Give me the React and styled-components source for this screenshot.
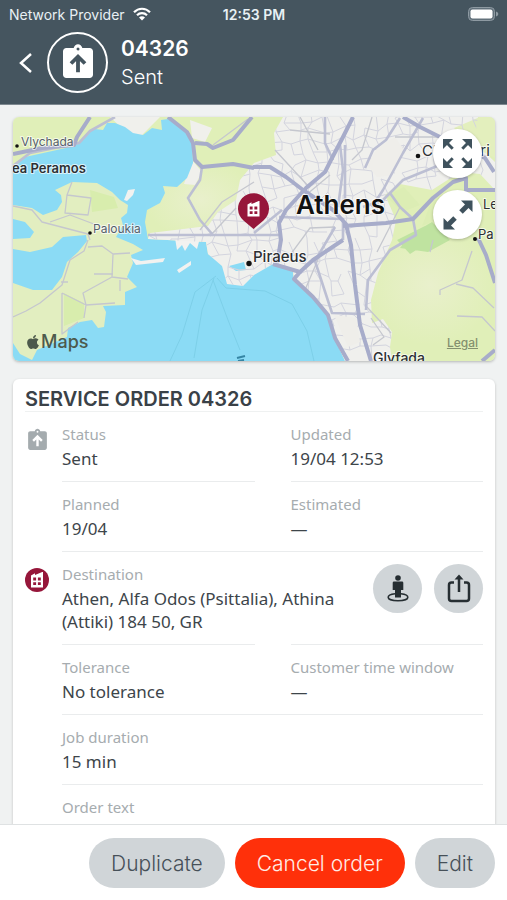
import React from "react";
import styled, { createGlobalStyle } from "styled-components";
import { FaApple } from "react-icons/fa";

const GlobalStyle = createGlobalStyle`
  * {
    box-sizing: border-box;
  }
  body {
    margin: 0;
    background-color: #f0f2f2;
    font-family: "Noto Sans", sans-serif;
    color: #3d454a;
  }
`;

const headingFont = `Inter, "Liberation Sans", sans-serif`;

const Screen = styled.div`
  height: 100vh;
  display: flex;
  flex-direction: column;
`;

const Header = styled.header`
  flex: none;
  background-color: #45555f;
  color: #fff;
  font-family: ${headingFont};
  border-bottom: 1px solid #7d888f;
`;

const StatusBar = styled.div`
  display: grid;
  grid-template-columns: 1fr auto 1fr;
  align-items: center;
  height: 28px;
  padding: 0 8px 0 9px;
  font-size: 14px;
  color: #e8f0f4;
`;

const Carrier = styled.div`
  display: flex;
  align-items: center;
  gap: 8px;
`;

const Clock = styled.div`
  font-weight: 600;
`;

const Battery = styled.svg`
  justify-self: end;
`;

const TitleBar = styled.div`
  display: flex;
  align-items: center;
  height: 76px;
  padding: 0 18px 7px;
`;

const BackButton = styled.button`
  display: flex;
  border: 0;
  padding: 0;
  margin-right: 13px;
  background: none;
  color: inherit;
`;

const OrderBadge = styled.div`
  display: flex;
  align-items: center;
  justify-content: center;
  width: 61px;
  height: 61px;
  margin-right: 13px;
  border: 2px solid #fff;
  border-radius: 50%;
`;

const OrderNumber = styled.h1`
  margin: 0;
  font-size: 21px;
  line-height: 28px;
  font-weight: 600;
`;

const OrderState = styled.div`
  font-size: 20px;
  line-height: 28px;
  font-weight: 300;
`;

const Content = styled.main`
  flex: 1;
  min-height: 0;
  overflow-y: auto;
  scrollbar-width: none;
  padding: 12px 12px 0 13px;
`;

const MapCard = styled.section`
  position: relative;
  overflow: hidden;
  border-radius: 6px;
  margin-bottom: 18px;
  box-shadow: 0 1px 3px rgba(0, 0, 0, 0.25);
`;

const MapDrawing = styled.svg`
  display: block;
  width: 100%;
  font-family: ${headingFont};
`;

const MapControls = styled.div`
  position: absolute;
  top: 12px;
  right: 13px;
  display: flex;
  flex-direction: column;
  gap: 12px;
`;

const RoundButton = styled.button`
  display: flex;
  align-items: center;
  justify-content: center;
  flex: none;
  width: 49px;
  height: 49px;
  padding: 0;
  border: 0;
  border-radius: 50%;
  color: ${(props) => (props.$raised ? "#3f525d" : "#262e32")};
  background-color: ${(props) => (props.$raised ? "#fff" : "#d0d5d8")};
  box-shadow: ${(props) =>
    props.$raised ? "0 1px 3px rgba(0, 0, 0, 0.25)" : "none"};
`;

const MapCredit = styled.div`
  position: absolute;
  left: 12px;
  bottom: 7px;
  display: flex;
  align-items: center;
  font-family: ${headingFont};
  font-size: 18px;
  line-height: 24px;
  font-weight: 500;
  color: #4d5a4c;
`;

const LegalLink = styled.a`
  position: absolute;
  right: 17px;
  bottom: 10px;
  font-family: ${headingFont};
  font-size: 12px;
  line-height: 16px;
  font-weight: 500;
  color: #84906f;
`;

const Card = styled.section`
  padding: 0 12px 48px;
  border-radius: 6px;
  background-color: #fff;
  box-shadow: 0 1px 3px rgba(0, 0, 0, 0.2);
`;

const CardTitle = styled.h2`
  margin: 0;
  padding: 8px 0 0;
  font-family: ${headingFont};
  font-size: 20px;
  line-height: 24px;
  font-weight: 600;
  color: #3a4147;
  border-bottom: 1px solid #eff1f1;
`;

const Group = styled.div`
  display: grid;
  grid-template-columns: 24px 1fr;
  column-gap: 13px;
`;

const GroupIcon = styled.div`
  padding-top: 16px;
  color: #a4abae;
`;

const Fields = styled.dl`
  margin: 0;
`;

const Row = styled.div`
  display: grid;
  grid-template-columns: ${(props) => props.$columns || "1fr 1fr"};
  column-gap: ${(props) => (props.$columns ? "8px" : "36px")};
  padding: 11px 0;
`;

const Label = styled.dt`
  margin-bottom: 2px;
  font-size: 15px;
  line-height: 22px;
  color: #a6acaf;
`;

const Value = styled.dd`
  margin: 0;
  font-size: 17px;
  line-height: 23px;
`;

const Actions = styled.div`
  display: flex;
  gap: 12px;
  padding-top: 1px;
`;

const Divider = styled.div`
  display: flex;
  gap: 36px;
`;

const Line = styled.div`
  flex: 1;
  height: 1px;
  background-color: #eaeced;
`;

const Footer = styled.footer`
  flex: none;
  display: flex;
  justify-content: flex-end;
  gap: 10px;
  padding: 13px 12px 12px;
  background-color: #fff;
  border-top: 1px solid #dfe2e3;
`;

const PillButton = styled.button`
  height: 50px;
  padding: 0 22px;
  border: 0;
  border-radius: 25px;
  font-family: ${headingFont};
  font-size: 21px;
  font-weight: 300;
  color: ${(props) => (props.$danger ? "#ffece6" : "#465058")};
  background-color: ${(props) => (props.$danger ? "#ff300a" : "#d0d5d8")};
`;

function ClipboardIcon({ size, arrow }) {
  return (
    <svg width={size} height={size} viewBox="0 0 24 24" fill="none">
      <path
        fill="currentColor"
        fillRule="evenodd"
        d="M19 3h-4.4C14.2 1.7 13.2.8 12 .8S9.800 1.700 9.400 3H5c-1.100 0-2 .9-2 2v14c0 1.100.9 2 2 2h14c1.100 0 2-.9 2-2V5c0-1.100-.9-2-2-2zm-7-.3a.9.9 0 1 1 0 1.800.9.9 0 0 1 0-1.800z"
      />
      <path
        d="M7.800 12.300 12 8.200l4.200 4.100M12 8.500v9"
        stroke={arrow}
        strokeWidth="2.300"
      />
    </svg>
  );
}

// walls, stepped roof and four windows, drawn around 0,0
function Building() {
  return (
    <path
      fill="#fff"
      fillRule="evenodd"
      d="M-6 -4.500 L-2 -6.800 V-5 L5.200 -8 H6 V7.500 H-6 Z M-3.800 -2.400 H-.9 V.5 H-3.800 Z M.9 -2.400 H3.800 V.5 H.9 Z M-3.800 2.200 H-.9 V5.100 H-3.800 Z M.9 2.200 H3.800 V5.100 H.9 Z"
    />
  );
}

function DestinationIcon() {
  return (
    <svg width="24" height="24" viewBox="-12 -12 24 24">
      <circle r="12" fill="#96163a" />
      <Building />
    </svg>
  );
}

function FullscreenIcon() {
  return (
    <svg width="29" height="29" viewBox="0 0 29 29">
      {[0, 90, 180, 270].map((angle) => (
        <g key={angle} transform={`rotate(${angle} 14.500 14.500)`}>
          <path d="M19 0H29V10Z" fill="currentColor" />
          <path d="M26 3L19.300 9.700" stroke="currentColor" strokeWidth="3" />
        </g>
      ))}
    </svg>
  );
}

function ResizeIcon() {
  return (
    <svg width="30" height="30" viewBox="0 0 30 30">
      {[0, 180].map((angle) => (
        <g key={angle} transform={`rotate(${angle} 15 15)`}>
          <path d="M18 0.500H29.500V12Z" fill="currentColor" />
          <path d="M26 4L18 12" stroke="currentColor" strokeWidth="5" />
        </g>
      ))}
    </svg>
  );
}

function StreetViewIcon() {
  return (
    <svg width="24" height="28" viewBox="0 0 24 28" fill="none">
      <path
        d="M9 18.800C5 19.200 2.200 20.500 2.200 22.200c0 2 4.300 3.500 9.800 3.500s9.800-1.500 9.800-3.500c0-1.700-2.800-3-6.800-3.400"
        stroke="currentColor"
        strokeWidth="1.600"
      />
      <circle cx="12" cy="3" r="2.800" fill="currentColor" />
      <path
        d="M8 6.500h8a1.300 1.300 0 0 1 1.300 1.300V15H15v7.500H9V15H6.700V7.800A1.300 1.300 0 0 1 8 6.500z"
        fill="currentColor"
      />
    </svg>
  );
}

function ShareIcon() {
  return (
    <svg width="24" height="30" viewBox="0 0 24 30" fill="none">
      <path
        d="M7 8.500H4.500a2.500 2.500 0 0 0-2.500 2.500v13.500A2.500 2.500 0 0 0 4.500 27h15a2.500 2.500 0 0 0 2.500-2.500V11a2.500 2.500 0 0 0-2.500-2.500H17M12 18V3"
        stroke="currentColor"
        strokeWidth="2.500"
      />
      <path d="M12 .5L16.500 5.500H7.500Z" fill="currentColor" />
    </svg>
  );
}

const CITY =
  "M283 117 L274 133 L276 155 L254 163 L240 180 L236 200 L218 212 L208 226 L150 233 L148 239 L206 242 L208 254 L222 266 L227 284 L243 286 L254 275 L273 264 L293 271 L294 281 L328 313 L334 337 L345 361 H392 L390 347 L392 332 L383 319 L372 323 L371 300 L378 273 L392 240 L396 220 L385 195 L400 184 L432 190 L460 172 L480 174 L495 190 V162 L474 142 L478 117 Z";

const MAIN_ROADS = [
  "M353 117 L343 137 L331 160 L325 172 L306 188 L286 210 L279 223 L281 240 L277 263",
  "M253 167 L270 167 L286 177 L303 190 L333 210 L346 224 L351 245 L355 285 L360 325 L371 361",
  "M403 117 L420 127 L440 137 L485 158 L494 172",
  "M495 190 H466 V178 L453 182 L433 198 L413 219 L386 223 L343 226",
  "M343 240 L313 260 L300 272 L273 264",
  "M300 272 L294 279 L313 297 L328 315 L335 338 L348 361",
  "M168 117 L187 132 L193 143 L195 160 L202 167 L233 164 L254 168",
  "M195 143 L207 144 L213 148 L233 140 L252 117",
  "M90 117 L77 137 L74 145 L42 148 L13 154",
  "M478 238 L486 255 L495 283",
  "M482 361 L495 350",
];

const SIDE_ROADS = [
  "M400 118 L386 140 L373 150 L365 168",
  "M423 118 L403 153 L383 190 L372 207",
  "M452 160 L403 180 L383 200 L363 207",
  "M340 145 L343 170 L338 207",
  "M345 145 V205",
  "M325 117 V143 L333 160",
  "M279 217 L343 219 L343 240",
  "M390 193 L400 207 L413 219 L416 235 L390 250 L368 280 L366 310",
  "M202 167 L200 180 L188 198 L200 220 L213 235 H280",
  "M148 235 H213",
  "M115 117 L90 131 L79 143 L30 153 L13 166",
  "M335 227 L315 261 L332 313 L365 314",
  "M254 233 L282 210",
];

const PATHS = [
  "M72 182 L67 195 L91 198 L88 215 L65 213 L67 195 M50 222 L70 215 L115 232 M13 206 L32 210 L42 222 L88 234 L90 240",
  "M88 240 L84 251 L70 260 L62 285 L40 303 L26 311 L13 317 M88 247 L102 246 L113 254 L130 253 M113 254 L112 277 L128 279 M112 277 L83 293 L86 305 L115 303 M62 293 L86 305 L84 318 M62 293 V334 L78 322",
  "M94 274 H113 M120 280 V291 M68 282 H61",
  "M248 119 L213 145 M200 230 L222 202 L254 182 M210 236 L236 208",
  "M472 251 L462 280 L440 290 V295 M456 284 L473 288 L494 308 M457 316 L482 317 L495 331",
  "M400 207 L377 252 M433 240 L430 252",
  "M371 318 L384 337 L373 345 M366 306 L391 333",
  "M300 117 L318 150 M275 150 L310 188 M290 130 L330 134 M300 200 L330 175 M285 262 L310 228 L335 227 M305 290 L322 250 M372 117 L362 150 L352 160 M395 137 L440 137",
];

// irregular street mesh, the same on every render
function buildStreets() {
  let seed = 7;
  const random = () => {
    seed = (seed * 16807) % 2147483647;
    return seed / 2147483647;
  };
  const step = 11;
  const points = [];
  for (let row = 0; row < 24; row++) {
    points.push([]);
    for (let col = 0; col < 33; col++) {
      points[row].push([
        Math.round(142 + col * step + random() * 8 + row * 1.500 - 15),
        Math.round(112 + row * step + random() * 8 - col * 0.500),
      ]);
    }
  }
  let d = "";
  for (let row = 0; row < 23; row++) {
    for (let col = 0; col < 32; col++) {
      const [x, y] = points[row][col];
      if (random() < 0.75) {
        d += `M${x} ${y}L${points[row][col + 1].join(" ")}`;
      }
      if (random() < 0.8) {
        d += `M${x} ${y}L${points[row + 1][col].join(" ")}`;
      }
    }
  }
  return d;
}

const STREETS = buildStreets();

function MapView() {
  return (
    <MapDrawing viewBox="13 117 482 244" aria-label="Map of Athens">
      <defs>
        <clipPath id="city">
          <path d={CITY} />
        </clipPath>
        <radialGradient id="hills">
          <stop offset="0" stopColor="#e9f0cc" />
          <stop offset="1" stopColor="#e9f0cc" stopOpacity="0" />
        </radialGradient>
      </defs>
      <rect x="13" y="117" width="482" height="244" fill="#e0efb8" />
      <ellipse cx="430" cy="285" rx="65" ry="60" fill="url(#hills)" />
      <ellipse cx="200" cy="200" rx="55" ry="40" fill="url(#hills)" />
      <path
        d="M432 222 L450 240 L428 252 L400 248 L410 235 Z M397 240 L425 226 L432 240 L410 254 Z"
        fill="#bfe3a0"
      />
      <path
        d="M110 117 H160 L155 122 L140 137 L124 130 Z M190 120 L212 128 L205 142 L192 138 Z M192 160 L202 172 L195 185 L184 184 Z"
        fill="#f0f0ec"
      />
      {/* gulf */}
      <path
        d="M13 168 L25 157 L75 146 L87 133 L95 129 L103 130 L107 123 L115 123 L125 127 L133 133 L143 135 L152 128 L162 130 L161 120 L168 119 L182 128 L192 140 L193 163 L187 178 L177 187 L163 186 L165 193 L160 203 L147 210 L145 222 L148 239 L206 242 L208 254 L222 264 L232 270 L250 268 L273 264 L293 272 L294 281 L328 313 L334 337 L345 361 H13 Z"
        fill="#8bdbf5"
      />
      {/* island of Salamis with its two bays */}
      <path
        d="M13 205 L32 208 L43 215 L57 210 L62 202 L61 195 L55 190 L72 182 L97 183 L112 192 L120 200 L128 205 L127 213 L121 218 L123 225 L116 237 L133 244 L143 250 L131 255 L133 263 L127 277 L137 287 L125 292 L125 305 L103 306 L106 312 L104 327 L98 328 L92 320 L80 322 L68 328 L67 337 L37 350 L32 360 L20 354 L13 343 Z"
        fill="#e2eec0"
      />
      <path
        d="M13 249 L30 252 L52 247 L63 237 L86 235 L87 241 L78 252 L67 262 L62 277 L52 290 L33 290 L13 283 Z M13 219 L25 222 L34 232 L30 238 L13 239 Z"
        fill="#8bdbf5"
      />
      <path
        d="M64 293 L84 303 L84 318 L64 326 Z M90 190 L114 197 L118 208 L92 212 Z"
        fill="#d8edad"
      />
      <path
        d="M131 258 L141 261 L165 258 L163 262 L136 265 Z M177 270 L191 261 V265 L179 273 Z M124 200 L128 190 L135 189 L133 195 L127 201 Z M175 238 L177 250 L182 245 L185 251 L190 243 L197 249 L200 238 Z M215 252 L223 266 L230 262 Z"
        fill="#f2f2f0"
      />
      <path d={CITY} fill="#f0f0ed" />
      <path d="M229 266 L244 262 L246 270 L236 271 Z" fill="#8bdbf5" />
      <path d="M454 128 L480 117 H495 V158 L470 145 Z" fill="#e3efbd" />
      <path
        d="M386 196 L404 187 L420 205 L402 212 Z M430 205 L440 195 L436 220 L422 226 Z"
        fill="#dcedb4"
      />
      <g fill="none" strokeLinejoin="round">
        <path
          d="M216 276 L195 292 L182 335 L170 361 M214 278 L202 310 L194 358 M213 280 L228 320 L240 350 M217 278 L226 288 L265 291 L292 304 L307 331 L314 361"
          stroke="#7dcfe8"
        />
        <path d="M237 358 L245 356 M238 361 L244 360" stroke="#3585a4" strokeWidth="2" />
        <path d={STREETS} stroke="#d3d4de" clipPath="url(#city)" />
        {/* open blocks inside the mesh */}
        <path
          d="M378 147 L395 137 L404 150 L393 175 L377 177 L367 165 Z M334 315 L356 318 L360 342 L348 347 Z"
          fill="#efeeea"
        />
        {PATHS.map((d) => (
          <path key={d} d={d} stroke="#c5c7ce" strokeWidth="1.300" />
        ))}
        {SIDE_ROADS.map((d) => (
          <path key={d} d={d} stroke="#bcbfd3" strokeWidth="2.600" />
        ))}
        {MAIN_ROADS.map((d) => (
          <path key={d} d={d} stroke="#a7acca" strokeWidth="4" />
        ))}
      </g>
      <path
        d="M253.500 229 L243.500 220.500 A15.500 15.500 0 1 1 263.500 220.500 Z"
        fill="#96163a"
      />
      <g transform="translate(253.500 209)">
        <Building />
      </g>
      <g fill="#111">
        <circle cx="17" cy="146" r="1.800" />
        <circle cx="90" cy="233" r="1.800" />
        <circle cx="249" cy="263.500" r="2.700" />
        <circle cx="418" cy="156" r="2.300" />
        <circle cx="475" cy="239" r="2" />
      </g>
      <g
        stroke="#fff"
        strokeOpacity="0.700"
        strokeWidth="2"
        strokeLinejoin="round"
        paintOrder="stroke"
        fill="#2c2f33"
        fontSize="13"
      >
        <text x="21" y="146" fontSize="12" fill="#55606a">Vlychada</text>
        <text x="12" y="173" fontWeight="600">ea Peramos</text>
        <text x="93" y="233" fontSize="12" fill="#55606a">Paloukia</text>
        <text x="253" y="262" fontSize="15" fontWeight="500">Piraeus</text>
        <text x="296" y="214" fontSize="26" fontWeight="600" fill="#111">Athens</text>
        <text x="422" y="156" fontSize="15">Chalandri</text>
        <text x="483" y="209">Le</text>
        <text x="478" y="239">Pa</text>
        <text x="373" y="363" fontSize="14" fontWeight="500">Glyfada</text>
      </g>
    </MapDrawing>
  );
}

function Field({ label, children }) {
  return (
    <div>
      <Label>{label}</Label>
      <Value>{children}</Value>
    </div>
  );
}

function SplitDivider() {
  return (
    <Divider>
      <Line />
      <Line />
    </Divider>
  );
}

export default function App() {
  return (
    <>
      <GlobalStyle />
      <Screen>
        <Header>
          <StatusBar>
            <Carrier>
              Network Provider
              <svg width="18" height="14" viewBox="0 0 18 14" fill="none">
                <path
                  d="M1 5.200C5.500.6 12.500.6 17 5.200M4 8.300c2.800-2.800 7.200-2.800 10 0"
                  stroke="#fff"
                  strokeWidth="2.200"
                />
                <path d="M9 13.500L6 10.500c1.700-1.600 4.300-1.600 6 0Z" fill="#fff" />
              </svg>
            </Carrier>
            <Clock>12:53 PM</Clock>
            <Battery width="31" height="14" viewBox="0 0 31 14">
              <rect x=".5" y=".5" width="26" height="13" rx="4" fill="#62717b" stroke="#8e9aa2" />
              <rect x="2.500" y="2.500" width="22" height="9" rx="2" fill="#fff" />
              <path d="M28 4.500C31 5.500 31 8.500 28 9.500Z" fill="#8e9aa2" />
            </Battery>
          </StatusBar>
          <TitleBar>
            <BackButton aria-label="Back">
              <svg width="16" height="22" viewBox="0 0 16 22" fill="none">
                <path d="M13 2L3 11l10 9" stroke="currentColor" strokeWidth="2.500" />
              </svg>
            </BackButton>
            <OrderBadge>
              <ClipboardIcon size={40} arrow="#45555f" />
            </OrderBadge>
            <div>
              <OrderNumber>04326</OrderNumber>
              <OrderState>Sent</OrderState>
            </div>
          </TitleBar>
        </Header>
        <Content>
          <MapCard>
            <MapView />
            <MapControls>
              <RoundButton $raised aria-label="Full screen">
                <FullscreenIcon />
              </RoundButton>
              <RoundButton $raised aria-label="Resize map">
                <ResizeIcon />
              </RoundButton>
            </MapControls>
            <MapCredit>
              <FaApple size={16} />
              Maps
            </MapCredit>
            <LegalLink href="#legal">Legal</LegalLink>
          </MapCard>
          <Card>
            <CardTitle>SERVICE ORDER 04326</CardTitle>
            <Group>
              <GroupIcon>
                <ClipboardIcon size={25} arrow="#fff" />
              </GroupIcon>
              <Fields>
                <Row>
                  <Field label="Status">Sent</Field>
                  <Field label="Updated">19/04 12:53</Field>
                </Row>
                <SplitDivider />
                <Row>
                  <Field label="Planned">19/04</Field>
                  <Field label="Estimated">—</Field>
                </Row>
                <Line />
              </Fields>
            </Group>
            <Group>
              <GroupIcon>
                <DestinationIcon />
              </GroupIcon>
              <Fields>
                <Row $columns="1fr auto">
                  <Field label="Destination">
                    Athen, Alfa Odos (Psittalia), Athina (Attiki) 184 50, GR
                  </Field>
                  <Actions>
                    <RoundButton aria-label="Street view">
                      <StreetViewIcon />
                    </RoundButton>
                    <RoundButton aria-label="Share">
                      <ShareIcon />
                    </RoundButton>
                  </Actions>
                </Row>
                <SplitDivider />
                <Row>
                  <Field label="Tolerance">No tolerance</Field>
                  <Field label="Customer time window">—</Field>
                </Row>
                <Line />
                <Row>
                  <Field label="Job duration">15 min</Field>
                </Row>
                <Line />
                <Row>
                  <Field label="Order text" />
                </Row>
              </Fields>
            </Group>
          </Card>
        </Content>
        <Footer>
          <PillButton>Duplicate</PillButton>
          <PillButton $danger>Cancel order</PillButton>
          <PillButton>Edit</PillButton>
        </Footer>
      </Screen>
    </>
  );
}
